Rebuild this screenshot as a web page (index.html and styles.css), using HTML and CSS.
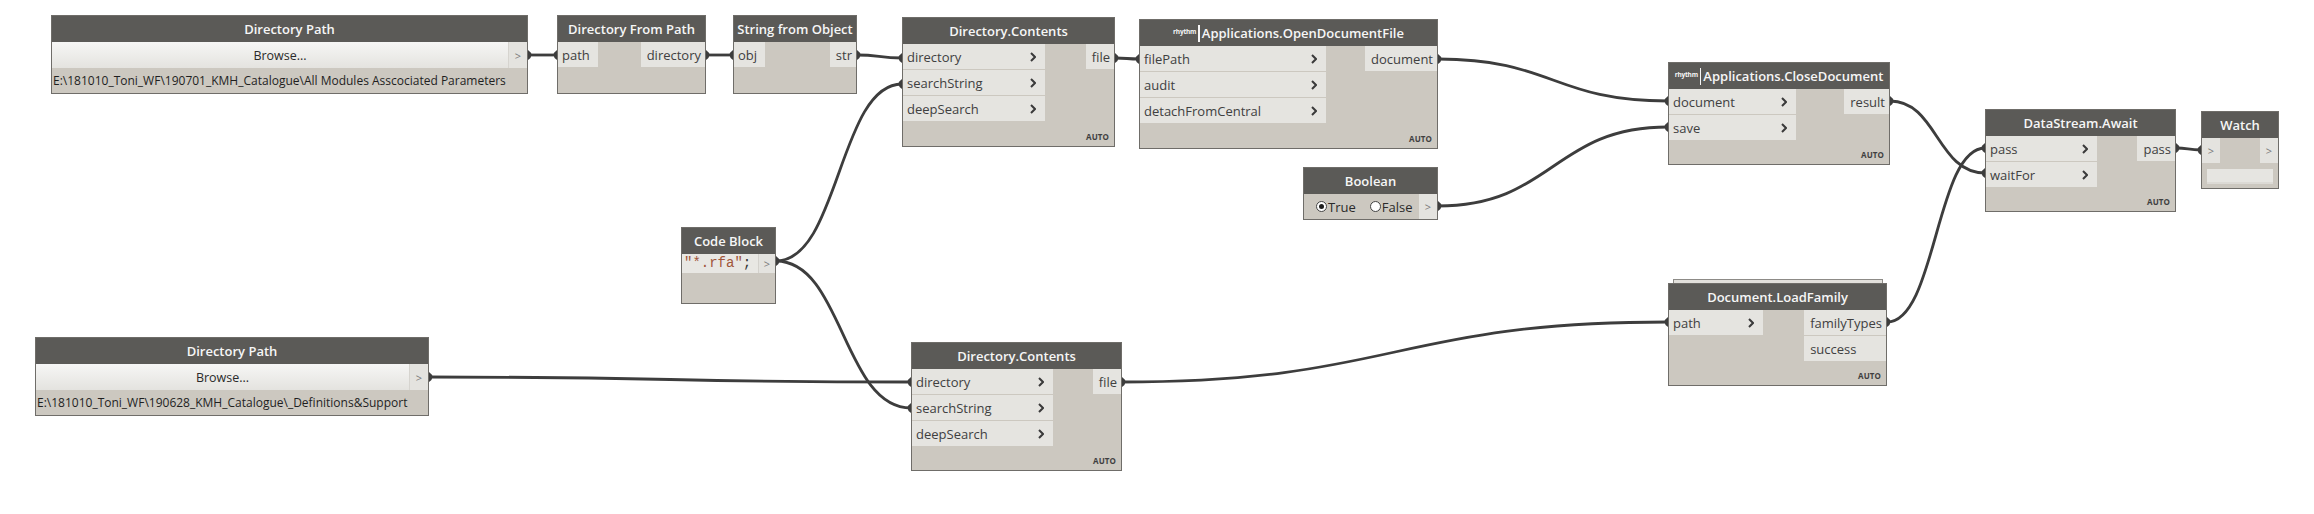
FILE: index.html
```html
<!DOCTYPE html>
<html>
<head>
<meta charset="utf-8">
<link rel="stylesheet" href="styles.css">
</head>
<body>
<div class="canvas">
  <svg class="wires" width="2314" height="514" viewBox="0 0 2314 514">
    <g class="wire">
      <path d="M528 55 L557 55"/>
      <path d="M706 55 L733 55"/>
      <path d="M857 55 C879 55 879 58 902 58"/>
      <path d="M776 261 C839 261 839 84 902 84"/>
      <path d="M776 261 C843 261 843 408 911 408"/>
      <path d="M429 377 C670 377 670 382 911 382"/>
      <path d="M1115 58 C1127 58 1127 59 1139 59"/>
      <path d="M1438 59 C1553 59 1553 101 1668 101"/>
      <path d="M1438 206 C1553 206 1553 127 1668 127"/>
      <path d="M1122 382 C1395 382 1395 322 1668 322"/>
      <path d="M1890 101 C1937 101 1937 173 1985 173"/>
      <path d="M1887 322 C1936 322 1936 148 1985 148"/>
      <path d="M2176 148 C2188 148 2188 150 2201 150"/>
    </g>
    <g class="peg">
      <path d="M528 50 Q535 55 528 60 Z"/>
      <path d="M557 50 Q550 55 557 60 Z"/>
      <path d="M706 50 Q713 55 706 60 Z"/>
      <path d="M733 50 Q726 55 733 60 Z"/>
      <path d="M857 50 Q864 55 857 60 Z"/>
      <path d="M902 53 Q895 58 902 63 Z"/>
      <path d="M902 79 Q895 84 902 89 Z"/>
      <path d="M776 256 Q783 261 776 266 Z"/>
      <path d="M911 403 Q904 408 911 413 Z"/>
      <path d="M429 372 Q436 377 429 382 Z"/>
      <path d="M911 377 Q904 382 911 387 Z"/>
      <path d="M1115 53 Q1122 58 1115 63 Z"/>
      <path d="M1139 54 Q1132 59 1139 64 Z"/>
      <path d="M1438 54 Q1445 59 1438 64 Z"/>
      <path d="M1668 96 Q1661 101 1668 106 Z"/>
      <path d="M1438 201 Q1445 206 1438 211 Z"/>
      <path d="M1668 122 Q1661 127 1668 132 Z"/>
      <path d="M1122 377 Q1129 382 1122 387 Z"/>
      <path d="M1668 317 Q1661 322 1668 327 Z"/>
      <path d="M1890 96 Q1897 101 1890 106 Z"/>
      <path d="M1985 168 Q1978 173 1985 178 Z"/>
      <path d="M1887 317 Q1894 322 1887 327 Z"/>
      <path d="M1985 143 Q1978 148 1985 153 Z"/>
      <path d="M2176 143 Q2183 148 2176 153 Z"/>
      <path d="M2201 145 Q2194 150 2201 155 Z"/>
    </g>
  </svg>

  <!-- Directory Path (top) -->
  <div class="node n-dp1">
    <div class="hdr">Directory Path</div>
    <div class="browse"><div class="btn">Browse...</div><div class="gt">&gt;</div></div>
    <div class="pathtxt">E:\181010_Toni_WF\190701_KMH_Catalogue\All Modules Asscociated Parameters</div>
  </div>

  <!-- Directory From Path -->
  <div class="node n-dfp">
    <div class="hdr">Directory From Path</div>
    <div class="body">
      <div class="ins"><div class="in plain">path</div></div>
      <div class="outs"><div class="out">directory</div></div>
    </div>
    <div class="foot"></div>
  </div>

  <!-- String from Object -->
  <div class="node n-sfo">
    <div class="hdr">String from Object</div>
    <div class="body">
      <div class="ins"><div class="in plain">obj</div></div>
      <div class="outs"><div class="out">str</div></div>
    </div>
    <div class="foot"></div>
  </div>

  <!-- Directory.Contents (top) -->
  <div class="node n-dc1">
    <div class="hdr">Directory.Contents</div>
    <div class="body">
      <div class="ins">
        <div class="in"><span>directory</span><svg class="chev" viewBox="0 0 6 10"><path d="M1 1 L5 5 L1 9"/></svg></div>
        <div class="in"><span>searchString</span><svg class="chev" viewBox="0 0 6 10"><path d="M1 1 L5 5 L1 9"/></svg></div>
        <div class="in"><span>deepSearch</span><svg class="chev" viewBox="0 0 6 10"><path d="M1 1 L5 5 L1 9"/></svg></div>
      </div>
      <div class="outs"><div class="out">file</div></div>
    </div>
    <div class="foot"><span class="auto">AUTO</span></div>
  </div>

  <!-- Applications.OpenDocumentFile -->
  <div class="node n-od">
    <div class="hdr"><span class="rh">rhythm</span><span class="bar"></span>Applications.OpenDocumentFile</div>
    <div class="body">
      <div class="ins">
        <div class="in"><span>filePath</span><svg class="chev" viewBox="0 0 6 10"><path d="M1 1 L5 5 L1 9"/></svg></div>
        <div class="in"><span>audit</span><svg class="chev" viewBox="0 0 6 10"><path d="M1 1 L5 5 L1 9"/></svg></div>
        <div class="in"><span>detachFromCentral</span><svg class="chev" viewBox="0 0 6 10"><path d="M1 1 L5 5 L1 9"/></svg></div>
      </div>
      <div class="outs"><div class="out">document</div></div>
    </div>
    <div class="foot"><span class="auto">AUTO</span></div>
  </div>

  <!-- Boolean -->
  <div class="node n-bool">
    <div class="hdr">Boolean</div>
    <div class="boolrow">
      <div class="radios">
        <span class="radio on"><i></i>True</span>
        <span class="radio"><i></i>False</span>
      </div>
      <div class="gt">&gt;</div>
    </div>
  </div>

  <!-- Applications.CloseDocument -->
  <div class="node n-cd">
    <div class="hdr"><span class="rh">rhythm</span><span class="bar"></span>Applications.CloseDocument</div>
    <div class="body">
      <div class="ins">
        <div class="in"><span>document</span><svg class="chev" viewBox="0 0 6 10"><path d="M1 1 L5 5 L1 9"/></svg></div>
        <div class="in"><span>save</span><svg class="chev" viewBox="0 0 6 10"><path d="M1 1 L5 5 L1 9"/></svg></div>
      </div>
      <div class="outs"><div class="out">result</div></div>
    </div>
    <div class="foot"><span class="auto">AUTO</span></div>
  </div>

  <!-- DataStream.Await -->
  <div class="node n-aw">
    <div class="hdr">DataStream.Await</div>
    <div class="body">
      <div class="ins">
        <div class="in"><span>pass</span><svg class="chev" viewBox="0 0 6 10"><path d="M1 1 L5 5 L1 9"/></svg></div>
        <div class="in"><span>waitFor</span><svg class="chev" viewBox="0 0 6 10"><path d="M1 1 L5 5 L1 9"/></svg></div>
      </div>
      <div class="outs"><div class="out">pass</div></div>
    </div>
    <div class="foot"><span class="auto">AUTO</span></div>
  </div>

  <!-- Watch -->
  <div class="node n-w">
    <div class="hdr">Watch</div>
    <div class="wrow"><div class="gt">&gt;</div><div class="gt">&gt;</div></div>
    <div class="wbar"></div>
  </div>

  <!-- Code Block -->
  <div class="node n-cb">
    <div class="hdr">Code Block</div>
    <div class="coderow"><div class="code"><span class="str">"*.rfa"</span>;</div><div class="gt">&gt;</div></div>
  </div>

  <!-- Directory Path (bottom) -->
  <div class="node n-dp2">
    <div class="hdr">Directory Path</div>
    <div class="browse"><div class="btn">Browse...</div><div class="gt">&gt;</div></div>
    <div class="pathtxt">E:\181010_Toni_WF\190628_KMH_Catalogue\_Definitions&amp;Support</div>
  </div>

  <!-- Directory.Contents (bottom) -->
  <div class="node n-dc2">
    <div class="hdr">Directory.Contents</div>
    <div class="body">
      <div class="ins">
        <div class="in"><span>directory</span><svg class="chev" viewBox="0 0 6 10"><path d="M1 1 L5 5 L1 9"/></svg></div>
        <div class="in"><span>searchString</span><svg class="chev" viewBox="0 0 6 10"><path d="M1 1 L5 5 L1 9"/></svg></div>
        <div class="in"><span>deepSearch</span><svg class="chev" viewBox="0 0 6 10"><path d="M1 1 L5 5 L1 9"/></svg></div>
      </div>
      <div class="outs"><div class="out">file</div></div>
    </div>
    <div class="foot"><span class="auto">AUTO</span></div>
  </div>

  <!-- Document.LoadFamily -->
  <div class="node n-lf">
    <div class="hdr">Document.LoadFamily</div>
    <div class="body">
      <div class="ins">
        <div class="in"><span>path</span><svg class="chev" viewBox="0 0 6 10"><path d="M1 1 L5 5 L1 9"/></svg></div>
      </div>
      <div class="outs"><div class="out">familyTypes</div><div class="out">success</div></div>
    </div>
    <div class="foot"><span class="auto">AUTO</span></div>
  </div>
</div>
</body>
</html>
```

FILE: styles.css
```css
html, body {
  margin: 0;
  padding: 0;
  background: #ffffff;
}

.canvas {
  position: relative;
  width: 2314px;
  height: 514px;
  overflow: hidden;
  background: #ffffff;
  font-family: "Open Sans", "Noto Sans", sans-serif;
}

.wires {
  position: absolute;
  left: 0;
  top: 0;
  z-index: 0;
}

.wire path {
  fill: none;
  stroke: #3d3d3d;
  stroke-width: 2.8;
}

.peg path {
  fill: #3d3d3d;
}

.node {
  position: absolute;
  z-index: 1;
  box-sizing: border-box;
  border: 1px solid #6f6d69;
  background: #ccc8c0;
  display: flex;
  flex-direction: column;
  color: #404040;
  font-size: 13px;
}

.hdr {
  height: 26px;
  flex: none;
  background: #5b5a57;
  color: #f6f6f6;
  font-weight: 600;
  font-size: 13px;
  display: flex;
  align-items: center;
  justify-content: center;
  white-space: nowrap;
}

.rh {
  font-size: 6.5px;
  font-weight: 700;
  margin-right: 2px;
  position: relative;
  top: -2px;
  letter-spacing: -0.2px;
}

.bar {
  width: 1.5px;
  height: 17px;
  background: #f6f6f6;
  margin-right: 2px;
  flex: none;
}

.body {
  display: flex;
  justify-content: space-between;
  align-items: flex-start;
}

.ins,
.outs {
  display: flex;
  flex-direction: column;
}

.in,
.out {
  height: 25px;
  margin-bottom: 1px;
  background: #e5e4e0;
  display: flex;
  align-items: center;
  box-sizing: border-box;
  white-space: nowrap;
}

.in {
  justify-content: space-between;
  padding: 0 9px 0 4px;
}

.in.plain {
  padding-right: 6px;
}

.out {
  padding: 0 4px 0 6px;
}

.chev {
  width: 6px;
  height: 10px;
  flex: none;
}

.chev path {
  fill: none;
  stroke: #3a3a3a;
  stroke-width: 2;
}

.foot {
  flex: 1;
  display: flex;
  justify-content: flex-end;
  align-items: flex-end;
  padding: 0 5px 4px 0;
}

.auto {
  font-size: 8px;
  font-weight: 700;
  color: #3f3f3f;
  letter-spacing: 0.1px;
}

.gt {
  width: 18px;
  flex: none;
  background: #e4e3df;
  color: #7a7a7a;
  font-size: 11px;
  display: flex;
  align-items: center;
  justify-content: center;
}

/* Directory Path */
.browse {
  display: flex;
  height: 26px;
  flex: none;
}

.btn {
  flex: 1;
  background: linear-gradient(#f6f6f5, #e4e3df);
  color: #2a2a2a;
  font-size: 12.5px;
  display: flex;
  align-items: center;
  justify-content: center;
  border-right: 1px solid #d6d4cf;
}

.pathtxt {
  height: 25px;
  display: flex;
  align-items: center;
  padding-left: 1px;
  font-size: 12px;
  color: #1f1f1f;
  white-space: nowrap;
}

/* Code Block */
.coderow {
  display: flex;
  height: 19px;
  flex: none;
}

.code {
  flex: 1;
  background: #e8e7e3;
  font-family: "Liberation Mono", "DejaVu Sans Mono", monospace;
  font-size: 14px;
  line-height: 19px;
  padding-left: 2px;
  color: #333;
  border-right: 1px solid #d3d1cc;
}

.code .str {
  color: #a0553a;
}

.coderow .gt {
  width: 16px;
}

/* Boolean */
.boolrow {
  display: flex;
  height: 25px;
  flex: none;
}

.radios {
  flex: 1;
  display: flex;
  align-items: center;
  gap: 14px;
  padding-left: 12px;
  font-size: 13px;
  color: #2a2a2a;
}

.radio {
  display: flex;
  align-items: center;
  gap: 1px;
}

.radio i {
  width: 9px;
  height: 9px;
  border-radius: 50%;
  border: 1px solid #444;
  background: #ffffff;
  box-sizing: content-box;
  position: relative;
}

.radio.on i::after {
  content: "";
  position: absolute;
  left: 2px;
  top: 2px;
  width: 5px;
  height: 5px;
  border-radius: 50%;
  background: #1e1e1e;
}

/* Watch */
.wrow {
  display: flex;
  justify-content: space-between;
  height: 25px;
  flex: none;
}

.wbar {
  margin: 6px 5px 4px;
  height: 13px;
  background: #e6e5e1;
  border-bottom: 2px solid #dcdad5;
}

/* node placement on the canvas */
.n-dp1 { left: 51px; top: 15px; width: 477px; height: 79px; }
.n-dfp { left: 557px; top: 15px; width: 149px; height: 79px; }
.n-dfp .ins { width: 40px; }
.n-sfo { left: 733px; top: 15px; width: 124px; height: 79px; }
.n-sfo .ins { width: 31px; }

.n-dc1 { left: 902px; top: 17px; width: 213px; height: 130px; }
.n-dc1 .ins { width: 142px; }

.n-od { left: 1139px; top: 19px; width: 299px; height: 130px; }
.n-od .ins { width: 186px; }

.n-bool { left: 1303px; top: 167px; width: 135px; height: 53px; }

.n-cd { left: 1668px; top: 62px; width: 222px; height: 103px; }
.n-cd .ins { width: 127px; }

.n-aw { left: 1985px; top: 109px; width: 191px; height: 103px; }
.n-aw .ins { width: 111px; }

.n-w { left: 2201px; top: 111px; width: 78px; height: 78px; }

.n-cb { left: 681px; top: 227px; width: 95px; height: 77px; }

.n-dp2 { left: 35px; top: 337px; width: 394px; height: 79px; }

.n-dc2 { left: 911px; top: 342px; width: 211px; height: 129px; }
.n-dc2 .ins { width: 141px; }

.n-lf { left: 1668px; top: 283px; width: 219px; height: 103px; }
.n-lf .ins { width: 94px; }

.n-lf::before {
  content: "";
  position: absolute;
  left: 4px;
  right: 3px;
  top: -5px;
  height: 3px;
  border: 1px solid #8d8b87;
  border-bottom: none;
  background: #e2e0dc;
}
```
